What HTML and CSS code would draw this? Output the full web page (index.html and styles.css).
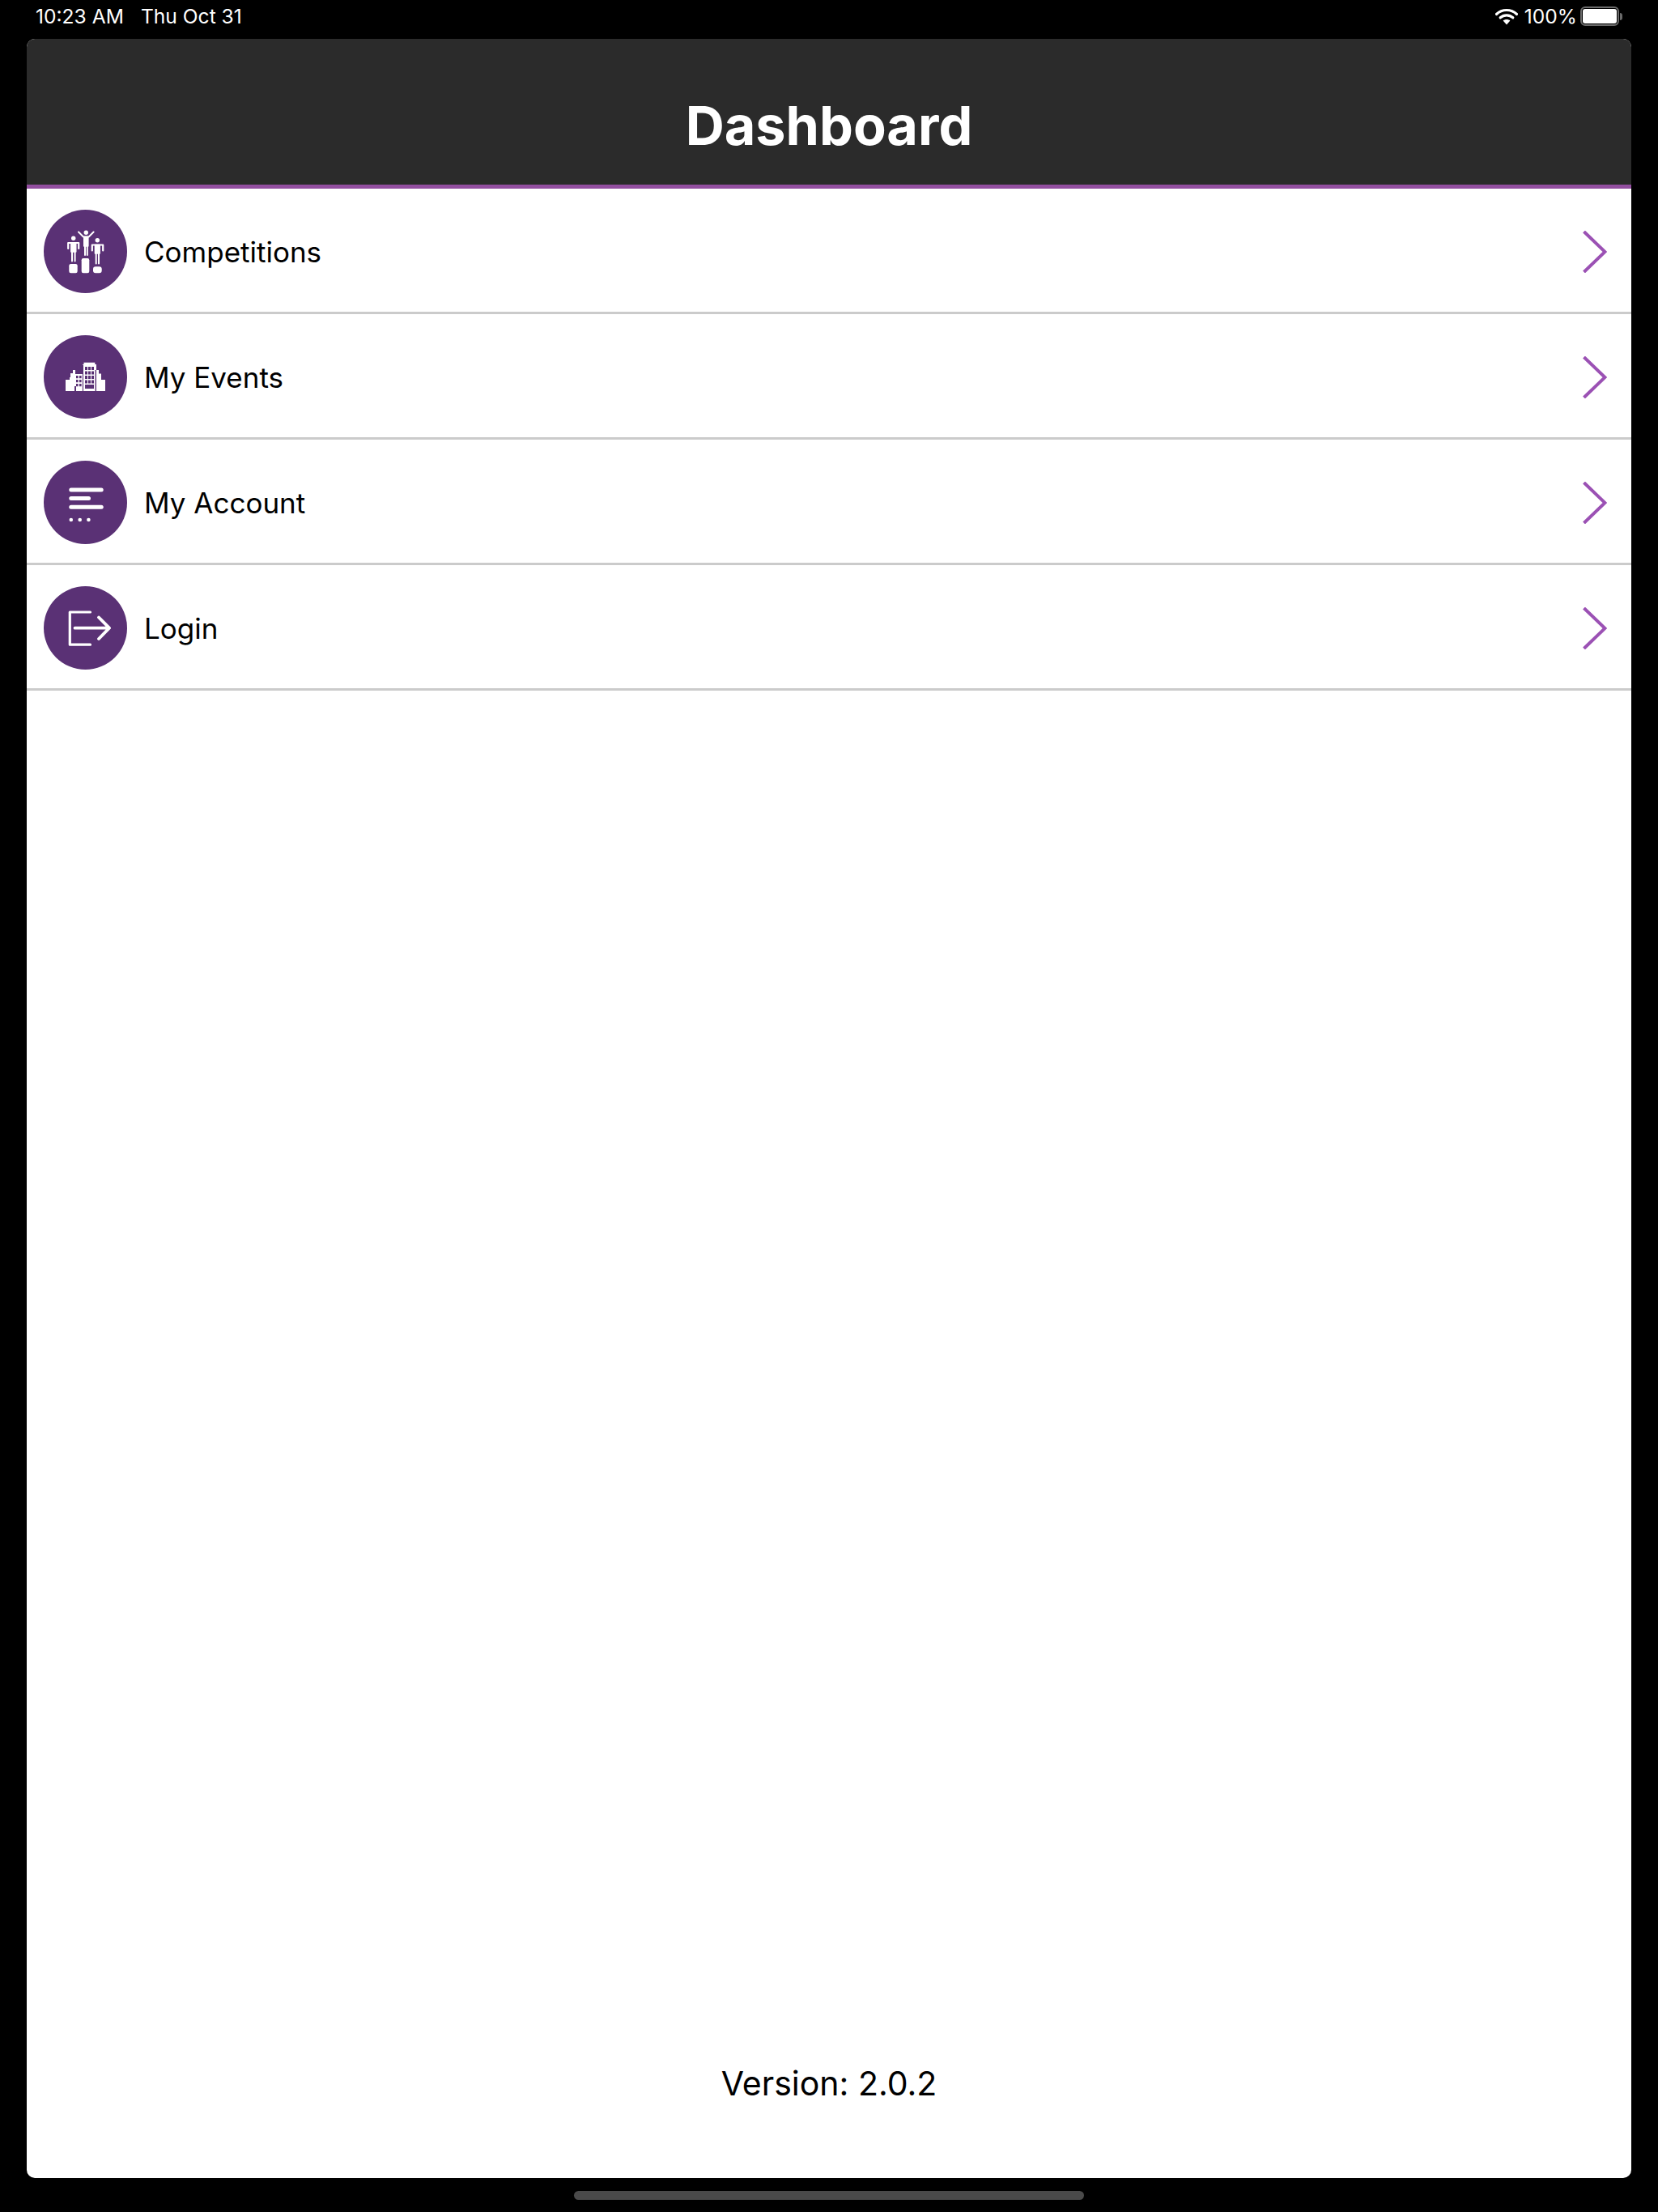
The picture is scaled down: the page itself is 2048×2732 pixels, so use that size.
FILE: index.html
```html
<!DOCTYPE html>
<html lang="en">
<head>
<meta charset="utf-8">
<title>Dashboard</title>
<link rel="stylesheet" href="styles.css">
</head>
<body>
<div class="status">
  <div class="status-left"><span>10:23 AM</span><span>Thu Oct 31</span></div>
  <div class="status-right">
    <svg class="wifi" width="28" height="21" viewBox="0 0 28 21"><path d="M1.5 7.5C8.5 0.8 19.5 0.8 26.5 7.5" fill="none" stroke="#fff" stroke-width="3.2" stroke-linecap="round"/><path d="M6.2 11.8C10.6 7.8 17.4 7.8 21.8 11.8" fill="none" stroke="#fff" stroke-width="3.2" stroke-linecap="round"/><path d="M14 20.5L9.6 15.6C12 13.6 16 13.6 18.4 15.6Z" fill="#fff"/></svg>
    <span class="pct">100%</span>
    <div class="battery"><div class="battery-body"><div class="battery-fill"></div></div><div class="battery-cap"></div></div>
  </div>
</div>
<main class="panel">
  <header class="header"><h1>Dashboard</h1></header>
  <nav class="menu">
    <a class="row">
      <svg class="icon" viewBox="0 0 103 103"><circle cx="51.5" cy="51.5" r="51.5" fill="#5a3175"/>
        <g fill="#fff"><circle cx="52.3" cy="28.3" r="2.7"/><circle cx="36.7" cy="35.2" r="2.7"/><circle cx="66.3" cy="37.7" r="2.7"/>
        <rect x="31.3" y="67" width="10.4" height="11.2" rx="2.2"/><rect x="46.7" y="60" width="9.6" height="18.3" rx="2.2"/><rect x="61" y="70.3" width="10.7" height="7.9" rx="3"/></g>
        <g fill="none" stroke="#fff" stroke-linecap="round" stroke-linejoin="round"><path d="M43 27.5L49 33.5H55.6L61.6 27.5" stroke-width="2"/><path d="M49.8 33.5V45H54.8V33.5Z" fill="#fff" stroke-width="1.6"/><path d="M51 45V56M53.8 45V56" stroke-width="2"/>
        <path d="M30.2 48V41H43.2V48" stroke-width="2.2"/><path d="M33.8 41V52H39.8V41Z" fill="#fff" stroke-width="1.4"/><path d="M35 52V63.5M38.6 52V63.5" stroke-width="2"/>
        <path d="M59.8 50.5V43.5H73.2V50.5" stroke-width="2.2"/><path d="M63.4 43.5V54H69.2V43.5Z" fill="#fff" stroke-width="1.4"/><path d="M64.7 54V66.5M68 54V66.5" stroke-width="2"/></g>
      </svg>
      <span class="label">Competitions</span>
      <svg class="chev" width="30" height="52" viewBox="0 0 30 52"><path d="M1.5 1L27.5 26L1.5 51" fill="none" stroke="#9b51b4" stroke-width="4"/></svg>
    </a>
    <a class="row">
      <svg class="icon" viewBox="0 0 103 103"><circle cx="51.5" cy="51.5" r="51.5" fill="#5a3175"/>
        <path fill="#fff" d="M27 69V55H32V52H33V55H32.7H33V47H36V43H39V48H48V36H49.5V33.7H63.3V36H65V43H68V47.5H71V55H76V69Z"/>
        <path fill="#5a3175" d="M47.9 69V36.7H49V69ZM63.6 69V43H65V69ZM38 69V63H40V69Z"/>
        <g fill="#5a3175"><rect x="51" y="39" width="3" height="4"/><rect x="55" y="39" width="3" height="4"/><rect x="59" y="39" width="3" height="4"/><rect x="51" y="44.5" width="3" height="4"/><rect x="55" y="44.5" width="3" height="4"/><rect x="59" y="44.5" width="3" height="4"/><rect x="51" y="50" width="3" height="4"/><rect x="55" y="50" width="3" height="4"/><rect x="59" y="50" width="3" height="4"/><rect x="51" y="55.5" width="3" height="4"/><rect x="55" y="55.5" width="3" height="4"/><rect x="59" y="55.5" width="3" height="4"/><rect x="51" y="61" width="11" height="5"/>
        <rect x="40" y="50" width="2.6" height="3.2"/><rect x="44" y="50" width="2.6" height="3.2"/><rect x="40" y="55" width="2.6" height="3.2"/><rect x="44" y="55" width="2.6" height="3.2"/><rect x="40" y="60" width="2.6" height="3.2"/><rect x="44" y="60" width="2.6" height="3.2"/></g>
      </svg>
      <span class="label">My Events</span>
      <svg class="chev" width="30" height="52" viewBox="0 0 30 52"><path d="M1.5 1L27.5 26L1.5 51" fill="none" stroke="#9b51b4" stroke-width="4"/></svg>
    </a>
    <a class="row">
      <svg class="icon" viewBox="0 0 103 103"><circle cx="51.5" cy="51.5" r="51.5" fill="#5a3175"/>
        <g fill="#fff"><rect x="31.3" y="33.5" width="42.4" height="5" rx="2.5"/><rect x="31.3" y="44" width="26.7" height="5" rx="2.5"/><rect x="31.3" y="54.8" width="42.4" height="5" rx="2.5"/><circle cx="33.8" cy="73" r="2.3"/><circle cx="44.7" cy="73" r="2.3"/><circle cx="55.4" cy="73" r="2.3"/></g>
      </svg>
      <span class="label">My Account</span>
      <svg class="chev" width="30" height="52" viewBox="0 0 30 52"><path d="M1.5 1L27.5 26L1.5 51" fill="none" stroke="#9b51b4" stroke-width="4"/></svg>
    </a>
    <a class="row">
      <svg class="icon" viewBox="0 0 103 103"><circle cx="51.5" cy="51.5" r="51.5" fill="#5a3175"/>
        <g fill="none" stroke="#fff" stroke-linecap="round" stroke-linejoin="round"><path d="M57.5 32H32.3V72.2H57.5" stroke-width="3.2"/><path d="M38.5 51.7H79M68 38.5L81 51.7L68 65" stroke-width="3.8"/></g>
      </svg>
      <span class="label">Login</span>
      <svg class="chev" width="30" height="52" viewBox="0 0 30 52"><path d="M1.5 1L27.5 26L1.5 51" fill="none" stroke="#9b51b4" stroke-width="4"/></svg>
    </a>
  </nav>
  <footer class="version">Version: 2.0.2</footer>
</main>
<div class="home"><div class="home-bar"></div></div>
</body>
</html>
```
FILE: styles.css
```css
* { box-sizing: border-box; }
html, body { margin: 0; padding: 0; }
body {
  width: 2048px;
  height: 2732px;
  background: #000;
  font-family: Inter, "Liberation Sans", sans-serif;
  overflow: hidden;
}
.status {
  height: 48px;
  padding: 0 44px;
  display: flex;
  justify-content: space-between;
  align-items: flex-start;
  color: #fff;
  font-size: 24.6px;
  line-height: 40px;
}
.status-left { display: flex; gap: 21px; }
.status-right { display: flex; align-items: flex-start; }
.wifi { margin-top: 10px; }
.pct { margin-left: 8px; }
.battery { margin-left: 4px; margin-top: 8px; display: flex; align-items: center; }
.battery-body {
  width: 48px;
  height: 24px;
  border: 2px solid #6a6a6a;
  border-radius: 6px;
  padding: 1px;
}
.battery-fill { width: 100%; height: 100%; background: #fff; border-radius: 3px; }
.battery-cap { width: 3px; height: 9px; background: #6a6a6a; border-radius: 0 3px 3px 0; margin-left: 1px; }
.panel {
  margin: 0 33px;
  height: 2642px;
  background: #fff;
  border-radius: 10px;
  overflow: hidden;
  display: flex;
  flex-direction: column;
}
.header {
  height: 185px;
  background: #2b2b2b;
  border-bottom: 5px solid #934fa0;
  display: flex;
  align-items: center;
  justify-content: center;
  padding-top: 34px;
}
.header h1 { margin: 0; color: #fff; font-size: 66.5px; font-weight: 700; line-height: 1; }
.menu { display: flex; flex-direction: column; }
.row {
  height: 155px;
  padding: 0 30px 0 21px;
  display: flex;
  align-items: center;
  border-bottom: 3px solid #cbcbcb;
  color: #000;
}
.icon { width: 103px; height: 103px; flex: none; margin-top: 3px; }
.label { margin-left: 21px; font-size: 35px; flex: 1; margin-top: 3px; }
.chev { flex: none; margin-top: 3px; }
.version {
  margin-top: auto;
  padding-bottom: 92px;
  text-align: center;
  font-size: 41px;
  line-height: 50px;
  color: #000;
}
.home { display: flex; justify-content: center; padding-top: 16px; }
.home-bar { width: 630px; height: 11px; border-radius: 6px; background: #4a4a4a; }
```
